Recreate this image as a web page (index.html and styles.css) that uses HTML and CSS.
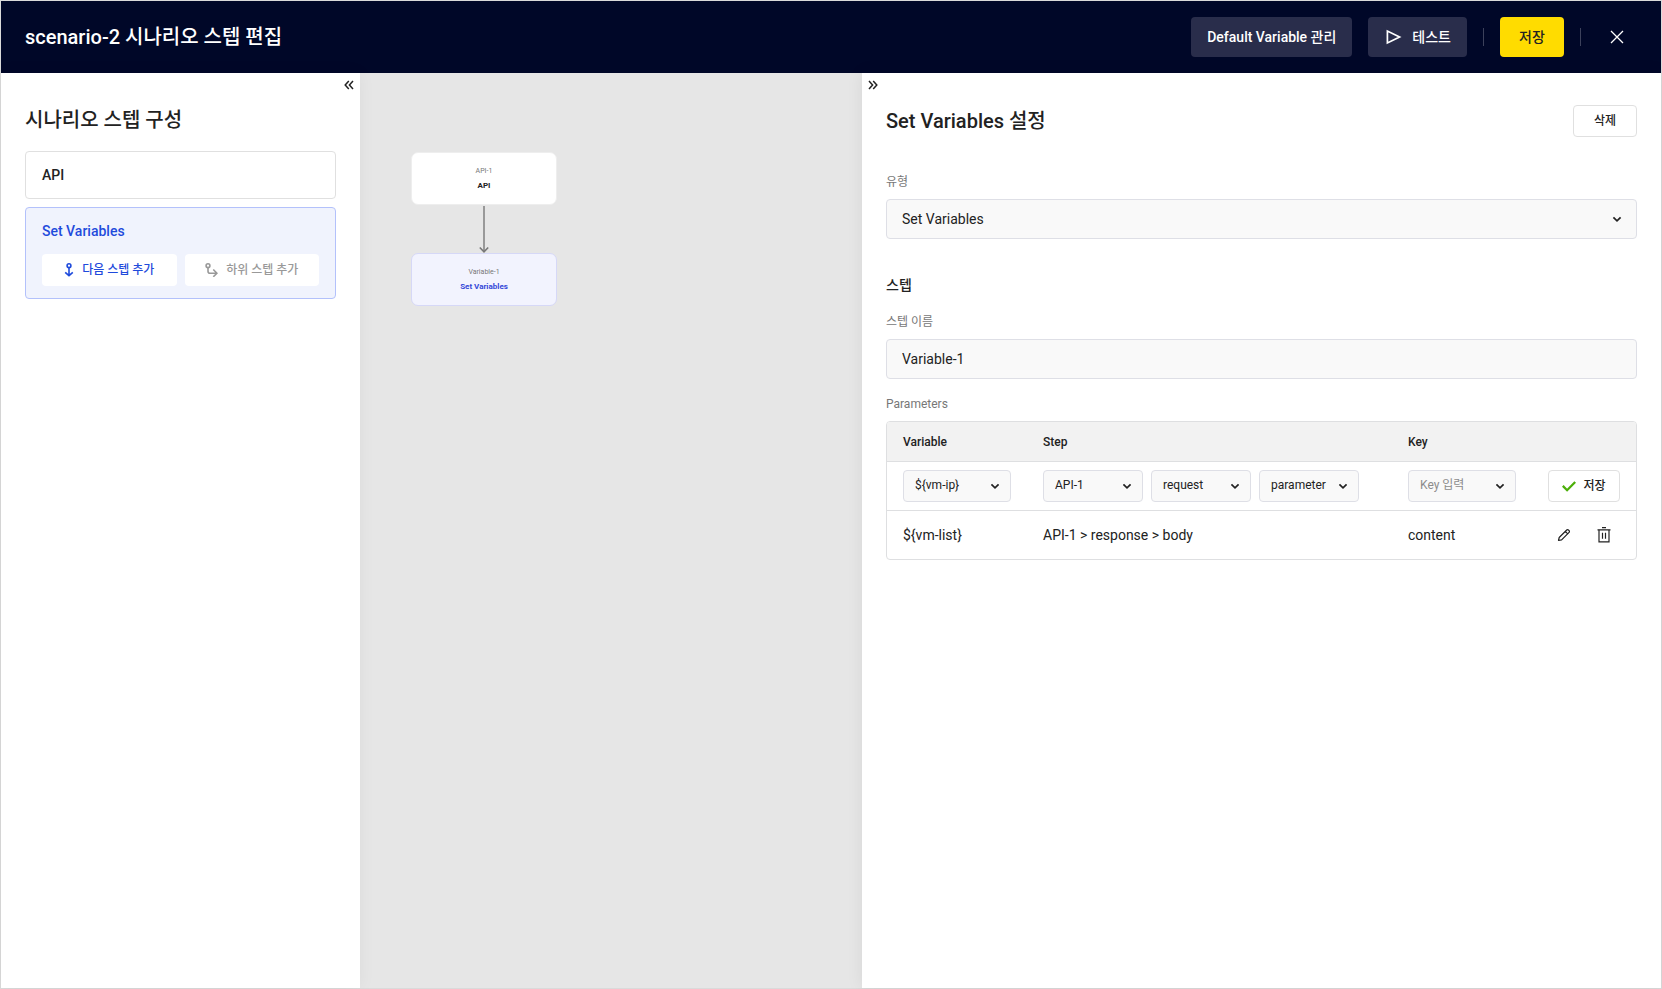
FILE: index.html
```html
<!DOCTYPE html>
<html lang="ko">
<head>
<meta charset="utf-8">
<meta name="viewport" content="width=device-width, initial-scale=1">
<title>scenario-2 시나리오 스텝 편집</title>
<link rel="stylesheet" href="styles.css">
</head>
<body>
<svg class="defs" aria-hidden="true">
  <symbol id="chevron" viewBox="0 0 10 7"><path d="M1.400 1.300 5 4.900l3.600-3.600" fill="none" stroke="currentColor" stroke-width="1.700"/></symbol>
</svg>
<div class="app">
  <header class="topbar">
    <h1 class="topbar-title">scenario-2 시나리오 스텝 편집</h1>
    <div class="topbar-actions">
      <button class="btn btn-dark" type="button">Default Variable 관리</button>
      <button class="btn btn-dark btn-test" type="button">
        <svg width="18" height="16" viewBox="0 0 18 16" aria-hidden="true"><path d="M3.400 2v12L15.600 8z" fill="none" stroke="currentColor" stroke-width="1.700"/></svg>
        테스트
      </button>
      <span class="divider"></span>
      <button class="btn btn-primary" type="button">저장</button>
      <span class="divider"></span>
      <button class="btn-close" type="button" aria-label="닫기">
        <svg width="14" height="14" viewBox="0 0 14 14" aria-hidden="true"><path d="M1 1l12 12M13 1 1 13" fill="none" stroke="currentColor" stroke-width="1.300"/></svg>
      </button>
    </div>
  </header>

  <main class="workspace">
    <aside class="steps">
      <button class="collapse collapse-left" type="button" aria-label="왼쪽 패널 접기">
        <svg width="10" height="10" viewBox="0 0 10 10" aria-hidden="true"><path d="M4.800 1 1.200 5l3.600 4M9 1 5.400 5 9 9" fill="none" stroke="currentColor" stroke-width="1.500"/></svg>
      </button>
      <h2 class="panel-title">시나리오 스텝 구성</h2>
      <ul class="step-list">
        <li class="step"><span class="step-name">API</span></li>
        <li class="step step-active">
          <span class="step-name">Set Variables</span>
          <div class="step-actions">
            <button class="add" type="button">
              <svg width="10" height="14" viewBox="0 0 10 14" aria-hidden="true"><g fill="none" stroke="currentColor" stroke-width="1.600"><circle cx="5" cy="2.700" r="1.900"/><path d="M5 4.500v8M1.200 9.300 5 12.700l3.800-3.400"/></g></svg>
              다음 스텝 추가
            </button>
            <button class="add" type="button" disabled>
              <svg width="13" height="14" viewBox="0 0 13 14" aria-hidden="true"><g fill="none" stroke="currentColor" stroke-width="1.600"><circle cx="3" cy="2.700" r="1.900"/><path d="M3 4.500v3.700q0 2 2 2h6.500M8.300 6.500l3.600 3.700-3.600 3.600"/></g></svg>
              하위 스텝 추가
            </button>
          </div>
        </li>
      </ul>
    </aside>

    <section class="canvas" aria-label="시나리오 흐름">
      <div class="flow">
        <div class="node"><span class="node-label">API-1</span><strong class="node-name">API</strong></div>
        <svg class="arrow" width="12" height="48" viewBox="0 0 12 48" aria-hidden="true"><path d="M6 1v46" stroke="#999" stroke-width="2"/><path d="M1.800 42.500 6 46.800l4.200-4.300" fill="none" stroke="#777" stroke-width="1.600"/></svg>
        <div class="node node-active"><span class="node-label">Variable-1</span><strong class="node-name">Set Variables</strong></div>
      </div>
    </section>

    <section class="settings">
      <button class="collapse collapse-right" type="button" aria-label="오른쪽 패널 접기">
        <svg width="10" height="10" viewBox="0 0 10 10" aria-hidden="true"><path d="M1 1l3.600 4L1 9M5.200 1l3.600 4-3.600 4" fill="none" stroke="currentColor" stroke-width="1.500"/></svg>
      </button>
      <div class="settings-head">
        <h2 class="panel-title">Set Variables 설정</h2>
        <button class="btn-outline btn-delete" type="button">삭제</button>
      </div>

      <label class="label" for="type">유형</label>
      <div class="select select-lg">
        <select id="type"><option>Set Variables</option></select>
        <svg class="chevron" width="10" height="7" aria-hidden="true"><use href="#chevron"/></svg>
      </div>

      <h3 class="section-title">스텝</h3>
      <label class="label" for="name">스텝 이름</label>
      <input class="input" id="name" type="text" value="Variable-1">

      <div class="label label-params" id="params">Parameters</div>
      <table class="params" aria-labelledby="params">
        <thead>
          <tr><th class="col-variable">Variable</th><th>Step</th><th class="col-key">Key</th><th class="col-actions" aria-label="작업"></th></tr>
        </thead>
        <tbody>
          <tr>
            <td>
              <div class="select">
                <select aria-label="Variable"><option>${vm-ip}</option></select>
                <svg class="chevron" width="10" height="7" aria-hidden="true"><use href="#chevron"/></svg>
              </div>
            </td>
            <td>
              <div class="step-selects">
                <div class="select">
                  <select aria-label="Step"><option>API-1</option></select>
                  <svg class="chevron" width="10" height="7" aria-hidden="true"><use href="#chevron"/></svg>
                </div>
                <div class="select">
                  <select aria-label="Step source"><option>request</option></select>
                  <svg class="chevron" width="10" height="7" aria-hidden="true"><use href="#chevron"/></svg>
                </div>
                <div class="select">
                  <select aria-label="Step field"><option>parameter</option></select>
                  <svg class="chevron" width="10" height="7" aria-hidden="true"><use href="#chevron"/></svg>
                </div>
              </div>
            </td>
            <td>
              <div class="select select-empty">
                <select aria-label="Key"><option>Key 입력</option></select>
                <svg class="chevron" width="10" height="7" aria-hidden="true"><use href="#chevron"/></svg>
              </div>
            </td>
            <td>
              <button class="btn-outline btn-save" type="button">
                <svg width="14" height="11" viewBox="0 0 14 11" aria-hidden="true"><path d="M.8 4.900 5.100 9.200 13.200 1" fill="none" stroke="#4caf0a" stroke-width="2.300"/></svg>
                저장
              </button>
            </td>
          </tr>
          <tr>
            <td>${vm-list}</td>
            <td>API-1 &gt; response &gt; body</td>
            <td>content</td>
            <td>
              <div class="row-actions">
                <button class="icon-btn" type="button" aria-label="수정">
                  <svg width="14" height="14" viewBox="0 0 14 14" aria-hidden="true"><path d="M1.500 12.500 2.200 9.500 9.700 2a1.200 1.200 0 0 1 1.700 0l.7.7a1.200 1.200 0 0 1 0 1.700l-7.500 7.500zM8.300 3.400l2.400 2.400" fill="none" stroke="currentColor" stroke-width="1.200" stroke-linejoin="round"/></svg>
                </button>
                <button class="icon-btn" type="button" aria-label="삭제">
                  <svg width="14" height="16" viewBox="0 0 14 16" aria-hidden="true"><path d="M.5 2.800h13M5 .7h4M2 2.800v12h10v-12M5.500 5.800v6M8.500 5.800v6" fill="none" stroke="currentColor" stroke-width="1.200"/></svg>
                </button>
              </div>
            </td>
          </tr>
        </tbody>
      </table>
    </section>
  </main>
</div>
</body>
</html>
```

FILE: styles.css
```css
*, *::before, *::after { box-sizing: border-box; }

body {
  margin: 0;
  color: #222;
  font: 400 14px/20px Roboto, "Noto Sans CJK KR", sans-serif;
}

h1, h2, h3, ul { margin: 0; padding: 0; }
ul { list-style: none; }

button, input, select {
  margin: 0;
  font: inherit;
  color: inherit;
}

button { padding: 0; border: 0; background: none; cursor: pointer; }
svg { display: block; flex: none; }
.defs { position: absolute; width: 0; height: 0; }

.app {
  display: flex;
  flex-direction: column;
  min-height: 100vh;
  border: 1px solid #dadada;
}

/* Top bar */
.topbar {
  display: flex;
  align-items: center;
  justify-content: space-between;
  height: 72px;
  padding: 0 24px;
  background: #000728;
  color: #fff;
}

.topbar-title { font-size: 20px; font-weight: 500; line-height: 28px; }
.topbar-actions { display: flex; align-items: center; gap: 16px; }

.btn {
  display: flex;
  align-items: center;
  justify-content: center;
  height: 40px;
  padding: 0 16px;
  border-radius: 4px;
  font-weight: 500;
}

.btn-dark { background: #292d4b; }
.btn-test { gap: 10px; }
.btn-primary { width: 64px; background: #ffdc00; color: #222; }
.divider { width: 1px; height: 18px; background: #3c415b; }

.btn-close {
  display: grid;
  place-items: center;
  width: 40px;
  height: 40px;
}

/* Workspace */
.workspace { display: flex; flex: 1; background: #e6e6e6; }

.panel-title { font-size: 20px; font-weight: 500; line-height: 28px; }

.collapse {
  position: absolute;
  top: 4px;
  display: grid;
  place-items: center;
  width: 16px;
  height: 16px;
}

.collapse-left { right: 3px; }
.collapse-right { left: 3px; }

.steps {
  position: relative;
  width: 359px;
  padding: 33px 24px;
  background: #fff;
  box-shadow: 0 0 16px rgba(0, 0, 0, .05);
}

.step-list { display: grid; gap: 8px; margin-top: 17px; }

.step {
  padding: 13px 16px;
  border: 1px solid #e0e0e0;
  border-radius: 4px;
}

.step-name { display: block; font-weight: 500; }
.step-active { padding-bottom: 12px; border-color: #b3c1fb; background: #f0f3fd; }
.step-active .step-name { color: #1f4bdc; }
.step-actions { display: flex; gap: 8px; margin-top: 13px; }

.add {
  display: flex;
  flex: 1;
  align-items: center;
  justify-content: center;
  gap: 8px;
  height: 32px;
  border-radius: 4px;
  background: #fff;
  color: #1f4bdc;
  font-size: 12px;
  font-weight: 500;
}

.add:disabled { color: #999; cursor: default; }

/* Flow canvas */
.canvas { flex: 1; padding: 79px 51px; }
.flow { display: flex; flex-direction: column; align-items: center; width: 146px; }

.node {
  display: flex;
  flex-direction: column;
  align-items: center;
  gap: 1px;
  width: 100%;
  padding: 12px 8px;
  border: 1px solid #eee;
  border-radius: 7px;
  background: #fff;
  line-height: 13px;
}

.node-label { color: #777; font-size: 7px; }
.node-name { font-size: 8px; }
.node-active { border-color: #d6d8f7; background: #f2f3fe; }
.node-active .node-name { color: #3548d8; }

/* Settings panel */
.settings {
  position: relative;
  width: 799px;
  padding: 32px 24px;
  background: #fff;
  box-shadow: 0 0 16px rgba(0, 0, 0, .07);
}

.settings-head {
  display: flex;
  align-items: center;
  justify-content: space-between;
  margin-bottom: 35px;
}

.btn-outline {
  display: flex;
  align-items: center;
  justify-content: center;
  gap: 7px;
  height: 32px;
  border: 1px solid #e0e0e0;
  border-radius: 4px;
  background: #fff;
  font-size: 12px;
  font-weight: 500;
}

.btn-delete { width: 64px; }
.btn-save { width: 100%; }

.label { display: block; margin-bottom: 7px; color: #777; font-size: 12px; }
.label-params { margin-top: 15px; }

.section-title {
  margin: 36px 0 17px;
  font-size: 14px;
  font-weight: 500;
  line-height: 20px;
}

.input, .select select {
  width: 100%;
  border: 1px solid #dedfe6;
  border-radius: 4px;
  background: #f9f9f9;
  outline: 0;
}

.input { display: block; height: 40px; padding: 0 15px; }

.select { display: grid; align-items: center; }

.select > * { grid-area: 1 / 1; }

.select select {
  height: 32px;
  padding: 0 24px 2px 11px;
  appearance: none;
  font-size: 12px;
}

.select-empty select { color: #8c8c8c; }

.chevron {
  justify-self: end;
  margin-right: 11px;
  pointer-events: none;
}

.select-lg select { height: 40px; padding: 0 32px 0 15px; font-size: 14px; }
.select-lg .chevron { margin-right: 15px; }

/* Parameters table */
.params {
  width: 100%;
  border: 1px solid #dedfe1;
  border-radius: 4px;
  border-spacing: 0;
  table-layout: fixed;
  overflow: hidden;
}

.params th, .params td { padding: 0 16px; text-align: left; }

.params th {
  height: 40px;
  border-bottom: 1px solid #dedfe1;
  background: #f2f2f2;
  font-size: 12px;
  font-weight: 500;
}

.params td { height: 48px; }
.params tr:first-child td { height: 49px; border-bottom: 1px solid #dedfe1; }
.col-variable, .col-key { width: 140px; }
.col-actions { width: 104px; }

.step-selects { display: grid; grid-template-columns: repeat(3, 100px); gap: 8px; }
.row-actions { display: flex; justify-content: space-between; }

.icon-btn {
  display: grid;
  place-items: center;
  width: 32px;
  height: 32px;
}
```
